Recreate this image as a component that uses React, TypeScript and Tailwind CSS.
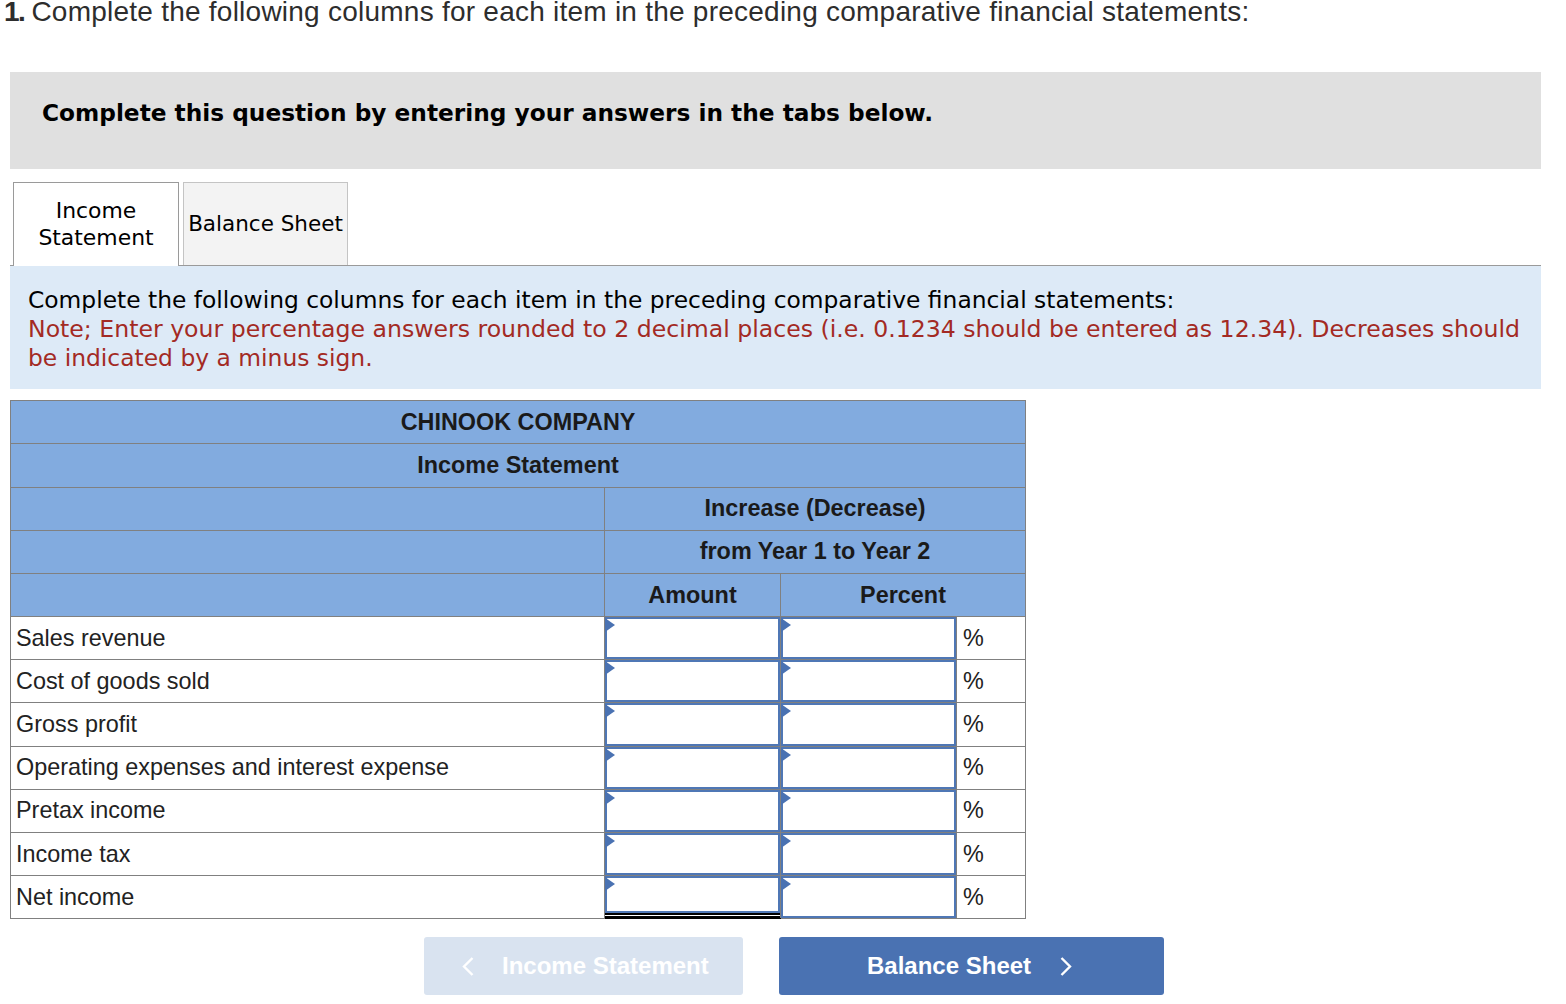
import React from "react";

const rows: { label: string; top?: boolean; dbl?: boolean }[] = [
  { label: "Sales revenue" },
  { label: "Cost of goods sold" },
  { label: "Gross profit", top: true },
  { label: "Operating expenses and interest expense" },
  { label: "Pretax income", top: true },
  { label: "Income tax" },
  { label: "Net income", top: true, dbl: true },
];

function Box({ dbl }: { dbl?: boolean }) {
  return (
    <div className="relative h-full w-full">
      <div className={"w-full border-2 border-[#4f77b5] bg-white " + (dbl ? "h-[calc(100%-5px)]" : "h-full")} />
      <div className="absolute left-0 top-[1px] h-[14px] w-[10px] bg-[#4a72b2] [clip-path:polygon(0_0,100%_50%,0_100%)]" />
      {dbl && <div className="absolute bottom-0 left-0 h-[5px] w-full border-y-2 border-black bg-white" />}
    </div>
  );
}

function Chevron({ left }: { left?: boolean }) {
  return (
    <svg width="12" height="19" viewBox="0 0 12 19" fill="none" stroke="#fff" strokeWidth="2.4">
      <polyline points={left ? "10.5,1 2,9.5 10.5,18" : "1.5,1 10,9.5 1.5,18"} />
    </svg>
  );
}

const head = "border border-[#808080] bg-[#82abdf] text-center font-bold text-[#1a1a1a] p-0";

export default function App() {
  return (
    <div className="w-[1566px] h-[1004px] overflow-hidden bg-white font-['Liberation_Sans',sans-serif] text-[#222]">
      <div className="pl-[4px] h-[72px] text-[28px] leading-[23px] tracking-[0.24px] text-[#2d2d2d]">
        <b className="mr-[-1px] tracking-[-1.5px]">1.</b> Complete the following columns for each item in the preceding comparative financial statements:
      </div>
      <div className="ml-[10px] mr-[25px]">
        <div className="h-[97px] bg-[#e0e0e0] pl-[32px] pt-[26px] font-['DejaVu_Sans',sans-serif] text-[23.25px] leading-[29px] font-bold text-black">
          Complete this question by entering your answers in the tabs below.
        </div>
        <div className="mt-[13px] flex h-[84px] items-end gap-[4px] border-b border-[#9a9a9a] pl-[3px] font-['DejaVu_Sans',sans-serif] leading-[27px] text-black">
          <div className="relative -mb-px flex h-[84px] w-[166px] items-center justify-center border border-b-0 border-[#9a9a9a] bg-white pb-[0.5px] text-center text-[21.9px]">
            Income<br />Statement
          </div>
          <div className="flex h-[83px] w-[165px] items-center justify-center border border-b-0 border-[#c4c4c4] bg-[#f3f3f3] pb-[2px] text-[21.5px]">
            Balance Sheet
          </div>
        </div>
        <div className="h-[123px] bg-[#ddeaf7] pl-[18px] pr-[10px] pt-[20px] font-['DejaVu_Sans',sans-serif] text-[23.36px] leading-[29px] text-black">
          Complete the following columns for each item in the preceding comparative financial statements:
          <div className="text-[23.6px] text-[#a32a24]">
            Note; Enter your percentage answers rounded to 2 decimal places (i.e. 0.1234 should be entered as 12.34). Decreases should <span className="text-[23.4px]">be indicated by a minus sign.</span>
          </div>
        </div>
        <table className="mt-[11px] w-[1015px] table-fixed border-collapse text-[23.4px] leading-[26px]">
          <colgroup>
            <col className="w-[594px]" />
            <col className="w-[176px]" />
            <col className="w-[176px]" />
            <col className="w-[69px]" />
          </colgroup>
          <tbody>
            <tr className="h-[43px]"><td colSpan={4} className={head}>CHINOOK COMPANY</td></tr>
            <tr className="h-[44px]"><td colSpan={4} className={head + " pb-[2px]"}>Income Statement</td></tr>
            <tr className="h-[43px]"><td className={head} /><td colSpan={3} className={head + " pb-[2px]"}>Increase (Decrease)</td></tr>
            <tr className="h-[43px]"><td className={head} /><td colSpan={3} className={head + " pb-[2px]"}>from Year 1 to Year 2</td></tr>
            <tr className="h-[43px]">
              <td className={head} />
              <td className={head}>Amount</td>
              <td colSpan={2} className={head}>Percent</td>
            </tr>
            {rows.map((r, i) => {
              const up = i >= 2 && i <= 4 ? "pb-[2px] " : "";
              return (
                <tr key={r.label} className={i === 2 ? "h-[44px]" : "h-[43px]"}>
                  <td className={up + "border border-[#808080] p-0 pl-[5px] text-[#222]"}>{r.label}</td>
                  <td className={"h-[43px] border border-[#808080] p-0 " + (r.top ? "border-t-black " : "") + (r.dbl ? "border-b-black" : "")}><Box dbl={r.dbl} /></td>
                  <td className="h-[43px] border border-[#808080] p-0"><Box /></td>
                  <td className={up + "border border-y-[#808080] border-r-[#808080] border-l-0 p-0 pl-[6px] text-[#222]"}>%</td>
                </tr>
              );
            })}
          </tbody>
        </table>
        <div className="mt-[18px] flex gap-[36px] pl-[414px]">
          <div className="flex h-[58px] w-[319px] items-center rounded-[3px] bg-[#d9e3f0] pl-[38px] text-[24px] font-bold text-white">
            <Chevron left />
            <span className="ml-[28px]">Income Statement</span>
          </div>
          <div className="flex h-[58px] w-[385px] items-center rounded-[3px] bg-[#4a72b2] pl-[88px] text-[24px] font-bold text-white">
            <span>Balance Sheet</span>
            <span className="ml-[29px] flex"><Chevron /></span>
          </div>
        </div>
      </div>
    </div>
  );
}
